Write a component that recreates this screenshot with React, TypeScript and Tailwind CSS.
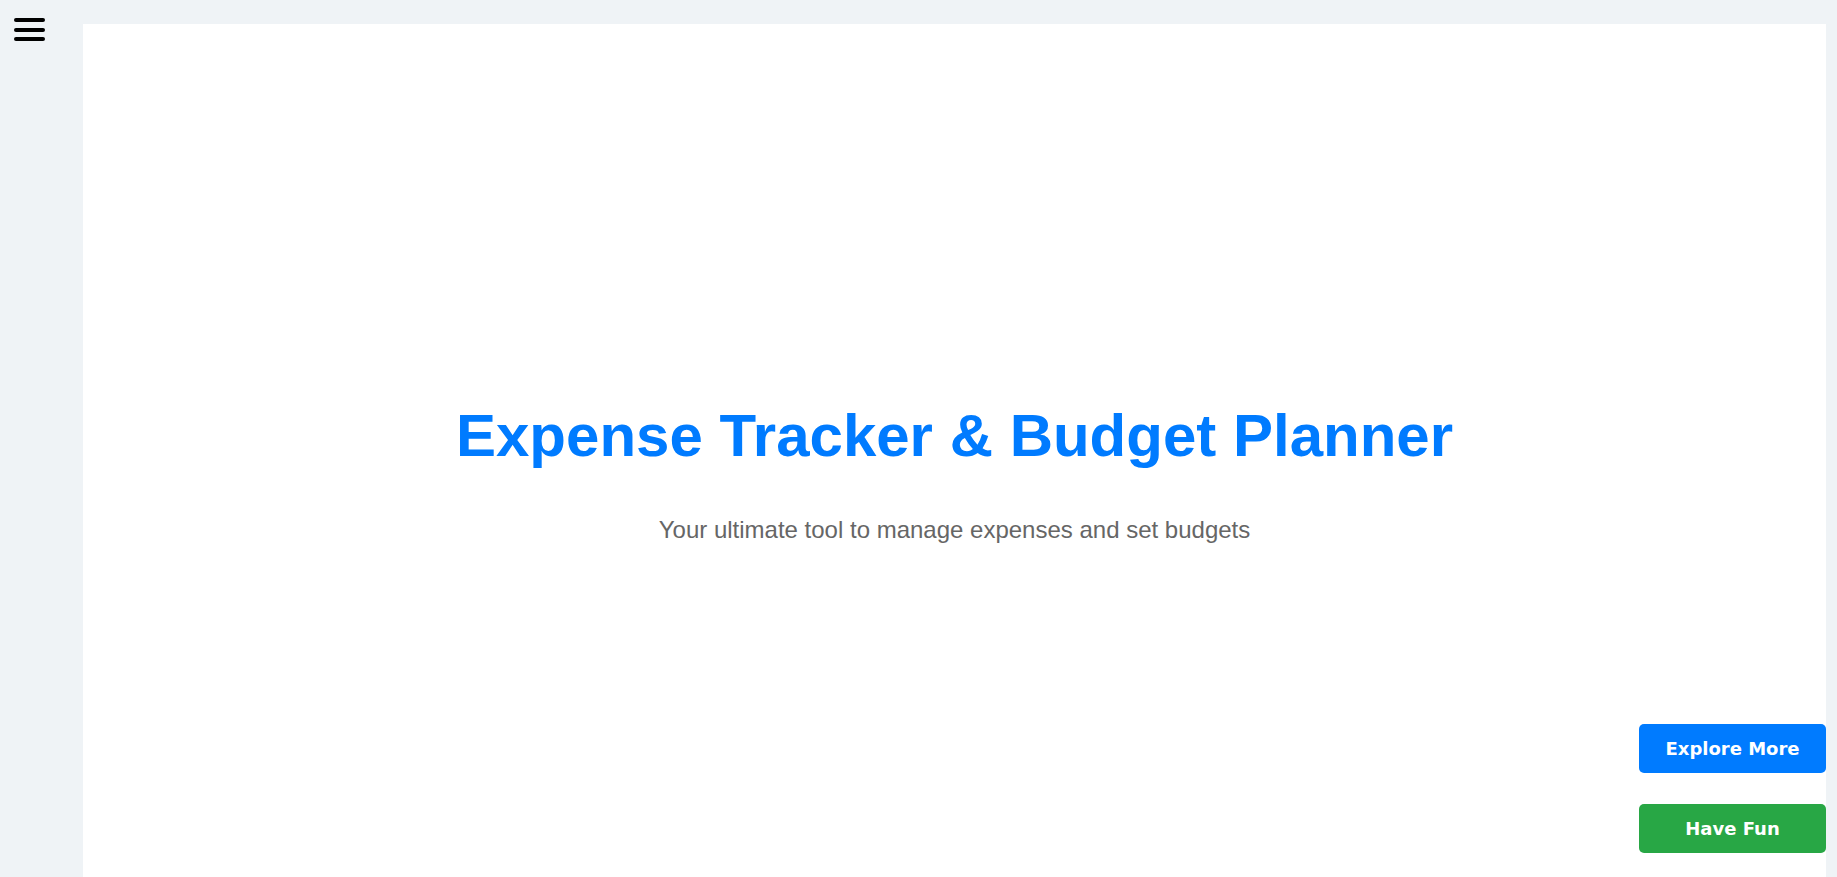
import React from "react";

export default function App() {
  return (
    <div className="relative h-screen overflow-hidden bg-[#eff3f6]">
      <button
        aria-label="menu"
        className="absolute left-[14px] top-[18px] flex w-[31px] flex-col gap-[5.5px]"
      >
        <span className="block h-[4px] w-full rounded-full bg-black" />
        <span className="block h-[4px] w-full rounded-full bg-black" />
        <span className="block h-[4px] w-full rounded-full bg-black" />
      </button>

      <div className="ml-[83px] mr-[11px] pt-[24px]">
        <main className="flex h-[853px] flex-col items-center bg-white pt-[377px] font-['Liberation_Sans',Arial,sans-serif]">
          <h1 className="text-[60px] font-bold leading-[69px] text-[#007bff]">
            Expense Tracker &amp; Budget Planner
          </h1>
          <p className="mt-[46px] text-[24px] leading-[28px] text-[#666666]">
            Your ultimate tool to manage expenses and set budgets
          </p>
        </main>
      </div>

      <div className="absolute bottom-[24px] right-[11px] flex w-[187px] flex-col gap-[31px] font-['DejaVu_Sans',sans-serif]">
        <button className="h-[49px] w-full rounded-[5px] bg-[#007bff] text-[18px] font-bold text-white">
          Explore More
        </button>
        <button className="h-[49px] w-full rounded-[5px] bg-[#28a745] text-[18px] font-bold text-white">
          Have Fun
        </button>
      </div>
    </div>
  );
}
